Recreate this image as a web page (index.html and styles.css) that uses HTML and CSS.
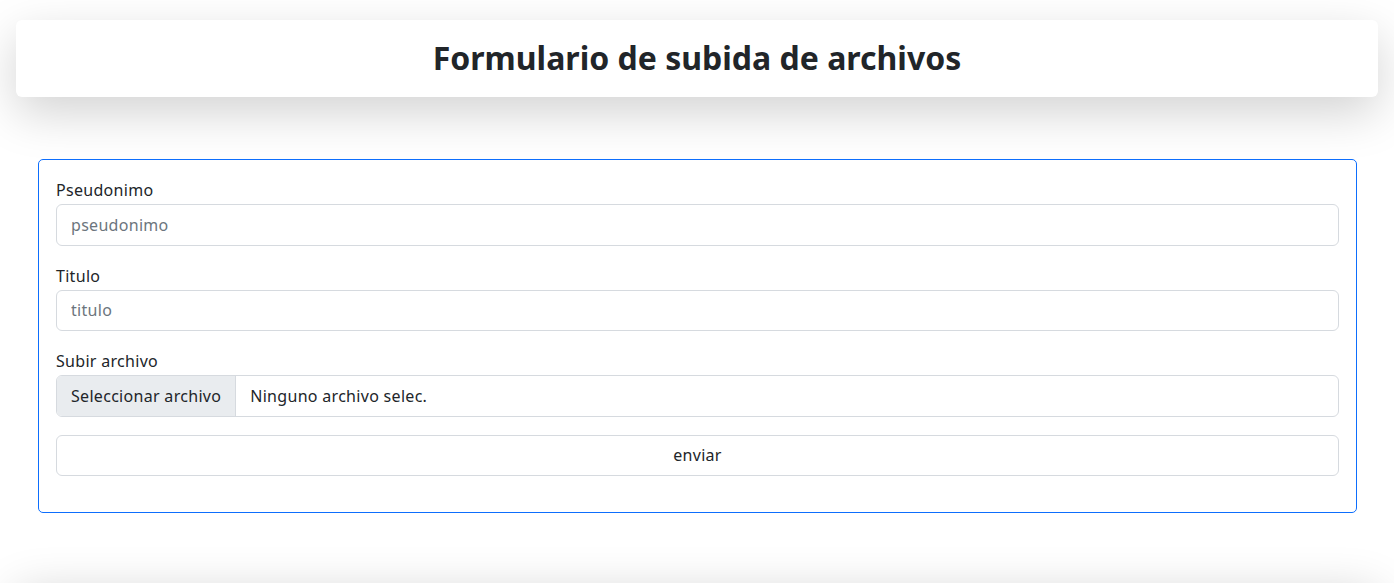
FILE: index.html
```html
<!DOCTYPE html>
<html lang="es">
<head>
<meta charset="utf-8">
<title>Formulario de subida de archivos</title>
<link rel="stylesheet" href="styles.css">
</head>
<body>
<header class="top-card">
  <h2 class="title">Formulario de subida de archivos</h2>
</header>
<main class="page">
  <form class="upload-card">
    <div class="field">
      <label class="field-label" for="pseudo">Pseudonimo</label>
      <input class="field-input" id="pseudo" type="text" placeholder="pseudonimo">
    </div>
    <div class="field">
      <label class="field-label" for="titulo">Titulo</label>
      <input class="field-input" id="titulo" type="text" placeholder="titulo">
    </div>
    <div class="field">
      <label class="field-label" for="archivo">Subir archivo</label>
      <div class="file-input" id="archivo">
        <span class="file-button">Seleccionar archivo</span>
        <span class="file-name">Ninguno archivo selec.</span>
      </div>
    </div>
    <button class="submit-button" type="button">enviar</button>
  </form>
</main>
<footer class="bottom-card"></footer>
</body>
</html>
```
FILE: styles.css
```css
* { box-sizing: border-box; }

html, body {
  margin: 0;
  padding: 0;
  background: #ffffff;
}

body {
  font-family: "Noto Sans", "Liberation Sans", sans-serif;
  font-size: 16px;
  line-height: 1.5;
  letter-spacing: 0.3px;
  color: #212529;
  overflow: hidden;
}

.top-card {
  margin: 20px 16px 0;
  height: 77px;
  background: #fff;
  border-radius: 6px;
  box-shadow: 0 16px 48px rgba(0, 0, 0, 0.175);
  display: flex;
  align-items: center;
  justify-content: center;
}

.title {
  margin: 0;
  font-size: 32px;
  font-weight: 700;
  line-height: 1.2;
  letter-spacing: 0;
  color: #212529;
}

.page {
  padding: 62px 37px 0 38px;
}

.upload-card {
  border: 1px solid #0d6efd;
  border-radius: 5px;
  padding: 18px 17px 36px;
  display: flex;
  flex-direction: column;
  gap: 18px;
  background: #fff;
}

.field {
  display: flex;
  flex-direction: column;
}

.field-label {
  line-height: 24px;
  margin-bottom: 2px;
}

.field-input,
.file-input,
.submit-button {
  height: 41.5px;
  border: 1px solid #d6dadf;
  border-radius: 6px;
  font: inherit;
  letter-spacing: inherit;
  color: #212529;
  background: #fff;
}

.field-input {
  padding: 0 14px;
  width: 100%;
}

.field-input::placeholder {
  color: #6c757d;
  opacity: 1;
}

.file-input {
  display: flex;
  align-items: stretch;
  overflow: hidden;
}

.file-button {
  background: #e9ecef;
  border-right: 1px solid #d6dadf;
  padding: 0 14px;
  display: flex;
  align-items: center;
}

.file-name {
  padding: 0 14px;
  display: flex;
  align-items: center;
}

.submit-button {
  width: 100%;
  text-align: center;
  padding: 0;
}

.bottom-card {
  margin: 76px 16px 0;
  height: 200px;
  background: #fff;
  border-radius: 6px;
  box-shadow: 0 4px 48px rgba(0, 0, 0, 0.19);
}
```
